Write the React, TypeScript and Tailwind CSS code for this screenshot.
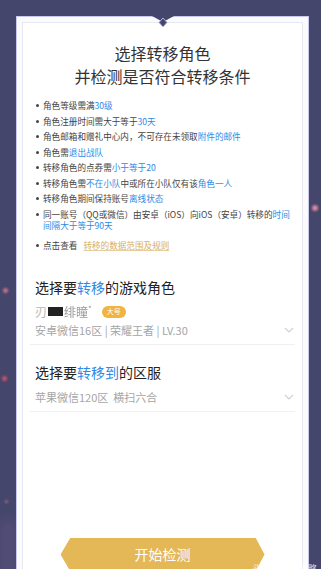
import React from "react";

const font = { fontFamily: '"Noto Sans CJK SC", "Noto Sans", sans-serif' };

const B = ({ children }: { children: React.ReactNode }) => (
  <span className="text-[#2e8ae6]">{children}</span>
);

const items: React.ReactNode[] = [
  <>角色等级需满<B>30级</B></>,
  <>角色注册时间需大于等于<B>30天</B></>,
  <>角色邮箱和赠礼中心内，不可存在未领取<B>附件的邮件</B></>,
  <>角色需<B>退出战队</B></>,
  <>转移角色的点券需<B>小于等于20</B></>,
  <>转移角色需<B>不在小队</B>中或所在小队仅有该<B>角色一人</B></>,
  <>转移角色期间保持账号<B>离线状态</B></>,
  <>同一账号（QQ或微信）由安卓（iOS）向iOS（安卓）转移的<B>时间<br />间隔大于等于90天</B></>,
];

function Chevron() {
  return (
    <svg width="10" height="6" viewBox="0 0 10 6" className="shrink-0">
      <path d="M1 1 L5 5 L9 1" fill="none" stroke="#cfcfd4" strokeWidth="1.1" />
    </svg>
  );
}

function Dot() {
  return (
    <span className="flex h-[11px] w-[7px] shrink-0 items-center">
      <span className="h-[3px] w-[3px] rounded-full bg-[#444]" />
    </span>
  );
}

export default function App() {
  return (
    <div
      className="relative h-[569px] w-[321px] overflow-hidden bg-[#45466b] pl-[16px] pr-[12px] pt-[16px]"
      style={font}
    >
      {/* bokeh dots */}
      <div className="absolute left-[3px] top-[288px] h-[5px] w-[5px] rounded-full bg-[#c7708a] blur-[1px]" />
      <div className="absolute left-[2px] top-[376px] h-[5px] w-[5px] rounded-full bg-[#d0506a] blur-[1px]" />
      <div className="absolute left-[5px] top-[500px] h-[3px] w-[3px] rounded-full bg-[#b06a8a] blur-[1px]" />
      <div className="absolute left-[312px] top-[205px] h-[6px] w-[6px] rounded-full bg-[#d78aa0] blur-[1px]" />
      <div className="absolute left-0 top-[520px] h-[60px] w-[16px] bg-[#6a5a8a] opacity-40 blur-[6px]" />

      {/* outer panel */}
      <div className="relative h-[600px] border border-[#c9c9f0] bg-[#fbfbfe] p-[5px]">
        {/* top notch */}
        <svg
          width="22"
          height="13"
          viewBox="0 0 22 13"
          className="absolute left-1/2 top-[-1px] -translate-x-1/2"
        >
          <polygon points="0,0 22,0 11,6" fill="#45466b" />
          <polygon points="11,2 15,6.5 11,11 7,6.5" fill="#45466b" stroke="#b7b7e6" strokeWidth="1" />
        </svg>

        {/* inner card */}
        <div className="flex h-full flex-col border border-[#e8e8f0] bg-white">
          <div className="pt-[19px] text-center text-[16px] leading-[23px] text-[#333]">
            <div>选择转移角色</div>
            <div>并检测是否符合转移条件</div>
          </div>

          <ul className="mt-[12px] pl-[13px] pr-[2px] text-[8.6px] leading-[11px] text-[#444]">
            {items.map((it, i) => (
              <li key={i} className="mb-[4.5px] flex">
                <Dot />
                <span>{it}</span>
              </li>
            ))}
            <li className="mt-[9px] flex">
              <Dot />
              <span>
                点击查看
                <span className="ml-[6px] text-[#d8b063] underline decoration-[#e6cf9c]">
                  转移的数据范围及规则
                </span>
              </span>
            </li>
          </ul>

          {/* section 1 */}
          <div className="mx-[7px] mt-[26px]">
            <div className="pl-[5px] text-[14px] leading-[20px] text-[#222]">
              选择要<span className="text-[#2e8ae6]">转移</span>的游戏角色
            </div>
            <div className="mt-[8px] flex h-[14px] items-center pl-[5px] text-[12px] text-[#aaa]">
              <span className="text-[#b8b8b8]">刃</span>
              <span className="ml-[1px] h-[9px] w-[15px] bg-[#222] blur-[0.6px]" />
              <span className="ml-[1px] text-[#999] blur-[0.4px]">绯瞳</span>
              <span className="mb-[6px] text-[8px] text-[#999]">*</span>
              <span className="ml-[10px] flex h-[12px] items-center rounded-full bg-[#f0b43f] px-[5px] text-[7px] text-white">
                大号
              </span>
            </div>
            <div className="mt-[3px] flex items-center justify-between pb-[6px] pl-[5px] pr-[1px] text-[11px] leading-[16px] text-[#a5a5a5]">
              <span>安卓微信16区 | 荣耀王者 | LV.30</span>
              <Chevron />
            </div>
            <div className="h-px bg-[#f0f0f2]" />
          </div>

          {/* section 2 */}
          <div className="mx-[7px] mt-[17px]">
            <div className="pl-[5px] text-[14px] leading-[20px] text-[#222]">
              选择要<span className="text-[#2e8ae6]">转移到</span>的区服
            </div>
            <div className="mt-[7px] flex items-center justify-between pb-[6px] pl-[5px] pr-[1px] text-[11px] leading-[16px] text-[#a5a5a5]">
              <span>苹果微信120区&nbsp;&nbsp;横扫六合</span>
              <Chevron />
            </div>
            <div className="h-px bg-[#f0f0f2]" />
          </div>

          {/* button */}
          <div className="mt-[126px] flex justify-center">
            <div className="flex h-[34px] w-[204px] items-center justify-center bg-[#e4b757] text-[14px] text-white [clip-path:polygon(10px_0,calc(100%_-_9px)_0,100%_50%,calc(100%_-_9px)_100%,10px_100%,0_50%)]">
              开始检测
            </div>
          </div>
        </div>
      </div>

      <div className="absolute right-[4px] top-[564px] text-[9px] leading-[10px] text-white/80">
        头条 @游戏攻略
      </div>
    </div>
  );
}
